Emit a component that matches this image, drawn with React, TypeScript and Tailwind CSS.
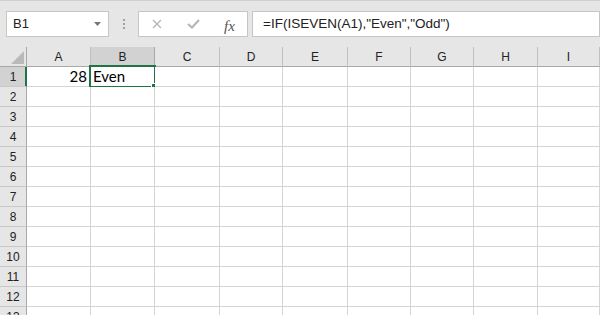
import React from "react";

const cols = ["A", "B", "C", "D", "E", "F", "G", "H", "I"];
const rows = [1, 2, 3, 4, 5, 6, 7, 8, 9, 10, 11, 12, 13];

const ui = { fontFamily: '"Liberation Sans", Arial, sans-serif' };
const cellFont = { fontFamily: 'Lato, "Liberation Sans", sans-serif' };

export default function App() {
  return (
    <div className="w-[600px] h-[315px] overflow-hidden bg-[#e6e6e6] border-t border-[#d0d0d0] flex flex-col" style={ui}>
      {/* formula bar */}
      <div className="flex pt-[10px] shrink-0">
        <div className="ml-[6px] w-[103px] h-[26px] bg-white border border-[#c6c6c6] flex items-center pl-[6px] pr-[6px] justify-between">
          <span className="text-[13px] text-[#222]">B1</span>
          <svg width="7" height="4" viewBox="0 0 7 4" className="mr-[1px]">
            <polygon points="0,0 7,0 3.5,4" fill="#777" />
          </svg>
        </div>
        <div className="w-[29px] flex items-center justify-center">
          <div className="flex flex-col gap-[2px] ml-[1px]">
            <div className="w-[2px] h-[2px] bg-[#a0a0a0]" />
            <div className="w-[2px] h-[2px] bg-[#a0a0a0]" />
            <div className="w-[2px] h-[2px] bg-[#a0a0a0]" />
          </div>
        </div>
        <div className="w-[110px] h-[26px] bg-white border border-[#c6c6c6] relative flex items-center">
          <svg width="10" height="10" viewBox="0 0 10 10" className="absolute left-[13px] top-[7px]">
            <path d="M1 1 L9 9 M9 1 L1 9" stroke="#b4b4b4" strokeWidth="1.3" fill="none" />
          </svg>
          <svg width="13" height="10" viewBox="0 0 13 10" className="absolute left-[48px] top-[7px]">
            <path d="M1 5 L5 8.5 L12 1" stroke="#b4b4b4" strokeWidth="2" fill="none" />
          </svg>
          <span
            className="absolute left-[85px] top-[3px] text-[15px] italic text-[#555]"
            style={{ fontFamily: '"Liberation Serif", "Times New Roman", serif' }}
          >
            fx
          </span>
        </div>
        <div className="w-[4px]" />
        <div className="w-[348px] h-[26px] bg-white border border-[#c6c6c6] flex items-center pl-[10px]">
          <span className="text-[13.5px] text-[#222] whitespace-nowrap">=IF(ISEVEN(A1),"Even","Odd")</span>
        </div>
      </div>
      <div className="h-[10px] shrink-0" />
      {/* column headers */}
      <div className="grid grid-cols-[27px_64px_64px_65px_63px_65px_63px_63px_64px_62px] h-[20px] shrink-0">
        <div className="border-r border-b border-[#a8a8a8] relative">
          <svg width="13" height="13" viewBox="0 0 13 13" className="absolute left-[11px] top-[4px]">
            <polygon points="13,0 13,13 0,13" fill="#b9b9b9" />
          </svg>
        </div>
        {cols.map((c) => (
          <div
            key={c}
            className={
              c === "B"
                ? "border-r border-b border-[#a8a8a8] bg-[#d2d2d2] flex items-center justify-center text-[12px] text-[#222] pt-[1px]"
                : "border-r border-b border-[#a8a8a8] border-r-[#c0c0c0] flex items-center justify-center text-[12px] text-[#222] pt-[1px]"
            }
          >
            {c}
          </div>
        ))}
      </div>
      {/* rows */}
      {rows.map((r) => (
        <div key={r} className="grid grid-cols-[27px_64px_64px_65px_63px_65px_63px_63px_64px_62px] h-[20px] shrink-0">
          <div
            className={
              r === 1
                ? "border-r border-b border-b-[#c8c8c8] border-r-[#217346] shadow-[inset_-1px_0_0_#217346] bg-[#d2d2d2] flex items-center justify-center text-[12px] text-[#222]"
                : "border-r border-b border-b-[#c8c8c8] border-r-[#a8a8a8] flex items-center justify-center text-[12px] text-[#222]"
            }
          >
            {r}
          </div>
          {cols.map((c) => (
            <div key={c} className="bg-white border-r border-b border-[#d4d4d4] relative text-[15px] text-black leading-[19px]" style={cellFont}>
              {r === 1 && c === "A" && <div className="text-right pr-[3px]">28</div>}
              {r === 1 && c === "B" && (
                <>
                  <div className="pl-[2px]">Even</div>
                  <div className="absolute -left-[2px] -top-[2px] w-[67px] h-[23px] border-2 border-[#217346]" />
                  <div className="absolute left-[60px] top-[16px] w-[7px] h-[7px] bg-[#217346] border border-white" />
                </>
              )}
            </div>
          ))}
        </div>
      ))}
    </div>
  );
}
